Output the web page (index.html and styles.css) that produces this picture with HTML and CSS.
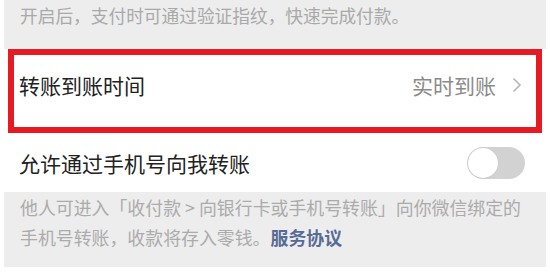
FILE: index.html
```html
<!DOCTYPE html>
<html lang="zh">
<head>
<meta charset="utf-8">
<link rel="stylesheet" href="styles.css">
</head>
<body>
<div class="page">
  <div class="tip top-tip">开启后，支付时可通过验证指纹，快速完成付款。</div>
  <div class="card">
    <div class="row row-highlight">
      <span class="label">转账到账时间</span>
      <span class="value">实时到账
        <svg class="chev" width="10" height="16" viewBox="0 0 10 16"><path d="M1.5 1.5 L8 8 L1.5 14.5" fill="none" stroke="#b5b5b5" stroke-width="1.6"/></svg>
      </span>
    </div>
    <div class="row row-plain">
      <span class="label">允许通过手机号向我转账</span>
      <span class="switch"><span class="knob"></span></span>
    </div>
  </div>
  <div class="tip bottom-tip">
    <span class="line">他人可进入「收付款 &gt; 向银行卡或手机号转账」向你微信绑定的</span>
    <span class="line">手机号转账，收款将存入零钱。<span class="link">服务协议</span></span>
  </div>
</div>
</body>
</html>
```
FILE: styles.css
```css
html, body {
  margin: 0;
  padding: 0;
  background: #ffffff;
}
body {
  width: 550px;
  height: 272px;
  overflow: hidden;
  font-family: "Noto Sans CJK SC", "Noto Sans", sans-serif;
}
.page {
  margin: 0 4px;
  background: #ededed;
  height: 267px;
  display: flex;
  flex-direction: column;
}
.tip {
  color: #a9a9a9;
  font-size: 17.7px;
  padding: 0 16px;
}
.top-tip {
  height: 49px;
  line-height: 31px;
  box-sizing: border-box;
}
.card {
  background: #ffffff;
}
.row {
  display: flex;
  align-items: center;
  justify-content: space-between;
  box-sizing: border-box;
}
.label {
  font-size: 21px;
  color: #222222;
}
.row-highlight {
  height: 84px;
  margin: 0 4px;
  border: 6px solid #e61a22;
  padding: 0 14px 13px 5px;
}
.value {
  display: flex;
  align-items: center;
  gap: 16px;
  font-size: 21px;
  color: #8a8a8a;
}
.chev {
  display: block;
}
.row-plain {
  height: 59px;
  padding: 0 21px 0 15px;
}
.switch {
  width: 58px;
  height: 32px;
  border-radius: 16px;
  background: #d2d2d2;
  position: relative;
  box-sizing: border-box;
}
.knob {
  position: absolute;
  left: 1px;
  top: 1px;
  width: 30px;
  height: 30px;
  border-radius: 50%;
  background: #ffffff;
  box-shadow: 0 0 0 0.5px #c8c8c8;
}
.bottom-tip {
  display: flex;
  flex-direction: column;
  font-size: 17.9px;
  padding-top: 1px;
  line-height: 29.5px;
  color: #ababab;
}
.line {
  display: block;
  white-space: nowrap;
}
.link {
  color: #576b95;
  font-weight: bold;
}
```
